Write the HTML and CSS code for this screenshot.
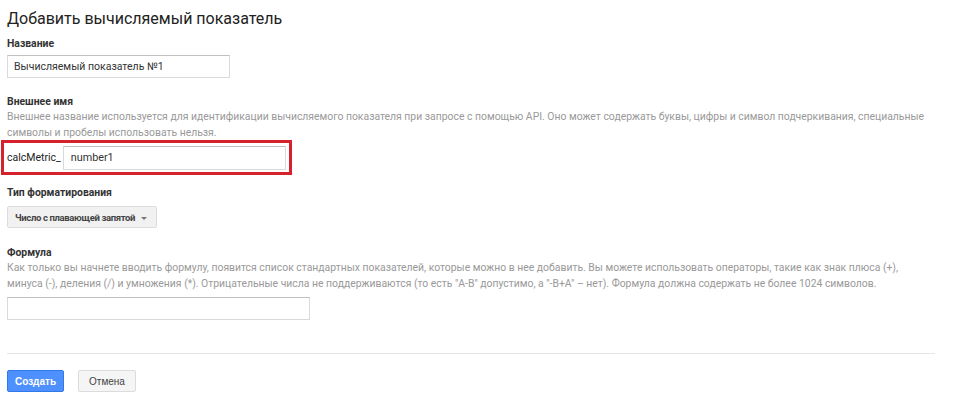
FILE: index.html
```html
<!DOCTYPE html>
<html lang="ru">
<head>
    <meta charset="UTF-8">
    <title>Добавить вычисляемый показатель</title>
    <link rel="stylesheet" href="styles.css">
</head>
<body>
    <div class="page">
        <h1>Добавить вычисляемый показатель</h1>

        <div class="field">
            <label class="label">Название</label>
            <input type="text" class="text-input name-input" value="Вычисляемый показатель №1">
        </div>

        <div class="field">
            <label class="label">Внешнее имя</label>
            <p class="hint">Внешнее название используется для идентификации вычисляемого показателя при запросе с помощью API. Оно может содержать буквы, цифры и символ подчеркивания, специальные символы и пробелы использовать нельзя.</p>
            <div class="external-name">
                <span class="prefix">calcMetric_</span>
                <input type="text" class="text-input ext-input" value="number1">
            </div>
        </div>

        <div class="field">
            <label class="label">Тип форматирования</label>
            <button class="dropdown">Число с плавающей запятой <span class="arrow"></span></button>
        </div>

        <div class="field formula">
            <label class="label">Формула</label>
            <p class="hint">Как только вы начнете вводить формулу, появится список стандартных показателей, которые можно в нее добавить. Вы можете использовать операторы, такие как знак плюса (+), минуса (-), деления (/) и умножения (*). Отрицательные числа не поддерживаются (то есть "A-B" допустимо, а "-B+A" – нет). Формула должна содержать не более 1024 символов.</p>
            <input type="text" class="text-input formula-input">
        </div>

        <hr>

        <div class="actions">
            <button class="btn btn-primary">Создать</button>
            <button class="btn">Отмена</button>
        </div>
    </div>
</body>
</html>
```

FILE: styles.css
```css
body {
    margin: 0;
    background-color: #fff;
    font-family: Roboto, "Liberation Sans", Arial, sans-serif;
    color: #333;
}
.page {
    display: flex;
    flex-direction: column;
    align-items: flex-start;
    width: 928px;
    padding: 0 7px;
}
h1 {
    font-size: 16px;
    font-weight: 400;
    color: #222;
    margin: 0;
    padding-top: 8px;
    line-height: 22px;
}
.field {
    margin-top: 7px;
    width: 100%;
}
.label {
    display: block;
    font-size: 10.4px;
    font-weight: bold;
    color: #333;
    line-height: 14px;
}
.hint {
    margin: 0;
    font-size: 10.4px;
    line-height: 16px;
    color: #999;
}
.text-input {
    display: block;
    box-sizing: border-box;
    height: 23px;
    border: 1px solid #d9d9d9;
    border-top-color: #c0c0c0;
    padding: 0 6px;
    font-family: Roboto, "Liberation Sans", Arial, sans-serif;
    font-size: 10.5px;
    color: #333;
    outline: none;
}
.name-input {
    width: 223px;
    margin-top: 4px;
    margin-bottom: 10px;
}
.external-name {
    display: flex;
    align-items: center;
    box-sizing: border-box;
    width: 291px;
    height: 35px;
    margin: -1px 0 4px -6px;
    padding-left: 3px;
    border: 3px solid #d5232e;
}
.prefix {
    font-size: 10.5px;
    color: #222;
    margin-right: 2px;
}
.ext-input {
    width: 223px;
    height: 24px;
    font-size: 10.8px;
    padding: 0 7px;
}
.dropdown {
    display: flex;
    align-items: center;
    margin-top: 6px;
    height: 22px;
    width: 150px;
    padding: 0 6px 0 7px;
    background-color: #f1f1f1;
    border: 1px solid #dcdcdc;
    border-radius: 2px;
    font-family: Roboto, "Liberation Sans", Arial, sans-serif;
    font-size: 9.5px;
    font-weight: bold;
    letter-spacing: -0.35px;
    color: #444;
    white-space: nowrap;
}
.arrow {
    margin-left: auto;
    width: 0;
    height: 0;
    border-left: 3px solid transparent;
    border-right: 3px solid transparent;
    border-top: 3px solid #777;
    margin-top: 2px;
    margin-right: 3px;
}
.formula {
    margin-top: 18px;
}
.formula-input {
    width: 303px;
    margin-top: 5px;
}
hr {
    align-self: stretch;
    border: none;
    border-top: 1px solid #e5e5e5;
    margin: 33px 0 16px 0;
}
.actions {
    display: flex;
    gap: 14px;
}
.btn {
    height: 22px;
    width: 58px;
    padding: 0;
    background-color: #f5f5f5;
    border: 1px solid #dcdcdc;
    border-radius: 2px;
    font-family: "Liberation Sans", Arial, sans-serif;
    font-size: 10px;
    color: #444;
    white-space: nowrap;
    cursor: pointer;
}
.btn-primary {
    width: 57px;
    background-color: #4d90fe;
    border-color: #3079ed;
    color: #fff;
    font-weight: bold;
}
```
